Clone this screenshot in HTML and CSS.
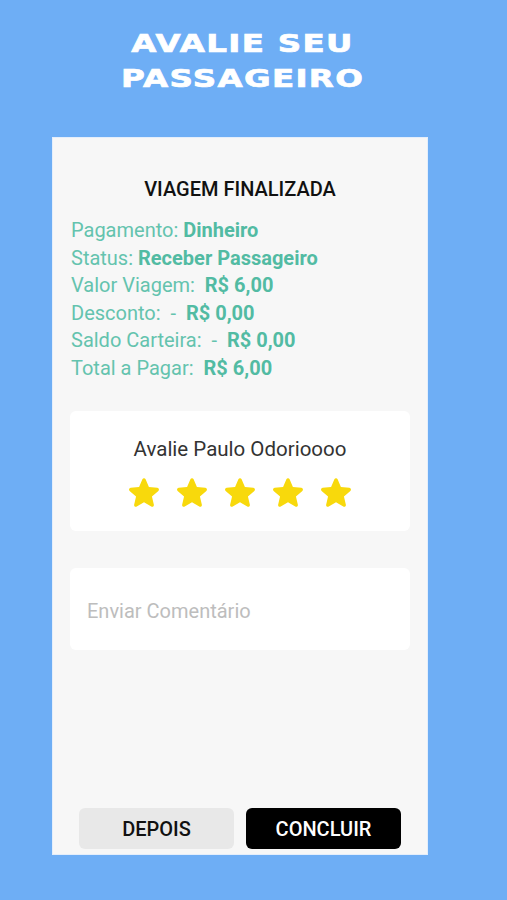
FILE: index.html
```html
<!DOCTYPE html>
<html lang="pt-BR">
<head>
<meta charset="utf-8">
<title>Avalie seu passageiro</title>
<link rel="stylesheet" href="styles.css">
</head>
<body>
<div class="page">
  <h1 class="title"><span>AVALIE SEU</span><span>PASSAGEIRO</span></h1>
  <main class="card">
    <h2 class="heading">VIAGEM FINALIZADA</h2>
    <div class="info">
      <div>Pagamento: <b>Dinheiro</b></div>
      <div>Status: <b>Receber Passageiro</b></div>
      <div>Valor Viagem:&nbsp; <b>R$ 6,00</b></div>
      <div>Desconto:&nbsp; -&nbsp; <b>R$ 0,00</b></div>
      <div>Saldo Carteira:&nbsp; -&nbsp; <b>R$ 0,00</b></div>
      <div>Total a Pagar:&nbsp; <b>R$ 6,00</b></div>
    </div>
    <section class="rate">
      <div class="rate-name">Avalie Paulo Odorioooo</div>
      <div class="stars">
        <svg viewBox="0 0 24 24"><path d="M12 17.27l4.15 2.51c.76.46 1.69-.22 1.49-1.08l-1.1-4.72 3.67-3.18c.67-.58.31-1.68-.57-1.75l-4.83-.41-1.89-4.46c-.34-.81-1.5-.81-1.840 0L9.19 8.63l-4.83.41c-.88.07-1.24 1.17-.57 1.75l3.67 3.18-1.1 4.72c-.2.86.73 1.54 1.49 1.08l4.15-2.5z"/></svg>
        <svg viewBox="0 0 24 24"><path d="M12 17.27l4.15 2.51c.76.46 1.69-.22 1.49-1.08l-1.1-4.72 3.67-3.18c.67-.58.31-1.68-.57-1.75l-4.83-.41-1.89-4.46c-.34-.81-1.5-.81-1.840 0L9.19 8.63l-4.83.41c-.88.07-1.24 1.17-.57 1.75l3.67 3.18-1.1 4.72c-.2.86.73 1.54 1.49 1.08l4.15-2.5z"/></svg>
        <svg viewBox="0 0 24 24"><path d="M12 17.27l4.15 2.51c.76.46 1.69-.22 1.49-1.08l-1.1-4.72 3.67-3.18c.67-.58.31-1.68-.57-1.75l-4.83-.41-1.89-4.46c-.34-.81-1.5-.81-1.840 0L9.19 8.63l-4.83.41c-.88.07-1.24 1.17-.57 1.75l3.67 3.18-1.1 4.72c-.2.86.73 1.54 1.49 1.08l4.15-2.5z"/></svg>
        <svg viewBox="0 0 24 24"><path d="M12 17.27l4.15 2.51c.76.46 1.69-.22 1.49-1.08l-1.1-4.72 3.67-3.18c.67-.58.31-1.68-.57-1.75l-4.83-.41-1.89-4.46c-.34-.81-1.5-.81-1.840 0L9.19 8.63l-4.83.41c-.88.07-1.24 1.17-.57 1.75l3.67 3.18-1.1 4.72c-.2.86.73 1.54 1.49 1.08l4.15-2.5z"/></svg>
        <svg viewBox="0 0 24 24"><path d="M12 17.27l4.15 2.51c.76.46 1.69-.22 1.49-1.08l-1.1-4.72 3.67-3.18c.67-.58.31-1.68-.57-1.75l-4.83-.41-1.89-4.46c-.34-.81-1.5-.81-1.840 0L9.19 8.63l-4.83.41c-.88.07-1.24 1.17-.57 1.75l3.67 3.18-1.1 4.72c-.2.86.73 1.54 1.49 1.08l4.15-2.5z"/></svg>
      </div>
    </section>
    <div class="comment">Enviar Comentário</div>
    <div class="actions">
      <button class="btn btn-later">DEPOIS</button>
      <button class="btn btn-done">CONCLUIR</button>
    </div>
  </main>
</div>
</body>
</html>
```
FILE: styles.css
```css
html, body {
  margin: 0;
  padding: 0;
  background: #6eaef5;
}
body {
  font-family: Roboto, "Liberation Sans", sans-serif;
}
.page {
  width: 376px;
  margin-left: 52px;
  padding-top: 26px;
}
.title {
  margin: 0 0 41px 0;
  padding-left: 6px;
  display: flex;
  flex-direction: column;
  align-items: center;
  font-family: "DejaVu Sans", sans-serif;
  font-weight: 700;
  font-size: 25px;
  line-height: 35px;
  color: #ffffff;
  letter-spacing: 1px;
  -webkit-text-stroke: 0.7px #ffffff;
}
.title span {
  display: block;
  transform: scaleX(1.3);
}
.card {
  height: 718px;
  box-sizing: border-box;
  background: #f7f7f7;
  border: 1px solid #e4eefb;
  padding: 39px 17px 5px 17px;
  display: flex;
  flex-direction: column;
}
.heading {
  margin: 0;
  text-align: center;
  font-size: 20px;
  font-weight: 500;
  line-height: 24px;
  color: #111111;
}
.info {
  margin-top: 16px;
  padding-left: 1px;
  font-size: 20px;
  line-height: 27.6px;
  color: #64c3ae;
}
.info b {
  font-weight: 700;
  color: #52bba3;
}
.rate {
  margin-top: 28px;
  height: 120px;
  box-sizing: border-box;
  background: #ffffff;
  border-radius: 6px;
  padding-top: 26px;
  display: flex;
  flex-direction: column;
  align-items: center;
}
.rate-name {
  font-size: 20.5px;
  line-height: 24px;
  color: #333333;
}
.stars {
  margin-top: 11px;
  display: flex;
  gap: 6px;
}
.stars svg {
  width: 42px;
  height: 42px;
  fill: #f8d90c;
}
.comment {
  margin-top: 37px;
  height: 82px;
  box-sizing: border-box;
  background: #ffffff;
  border-radius: 6px;
  padding-left: 17px;
  padding-top: 4px;
  display: flex;
  align-items: center;
  font-size: 20px;
  color: #bdbdbd;
}
.actions {
  margin-top: auto;
  display: flex;
  justify-content: center;
  gap: 12px;
}
.btn {
  width: 155px;
  height: 41px;
  border: none;
  border-radius: 6px;
  font-family: Roboto, "Liberation Sans", sans-serif;
  font-size: 20px;
  font-weight: 500;
  padding: 0;
}
.btn-later {
  background: #e8e8e8;
  color: #111111;
}
.btn-done {
  background: #000000;
  color: #ffffff;
}
```
